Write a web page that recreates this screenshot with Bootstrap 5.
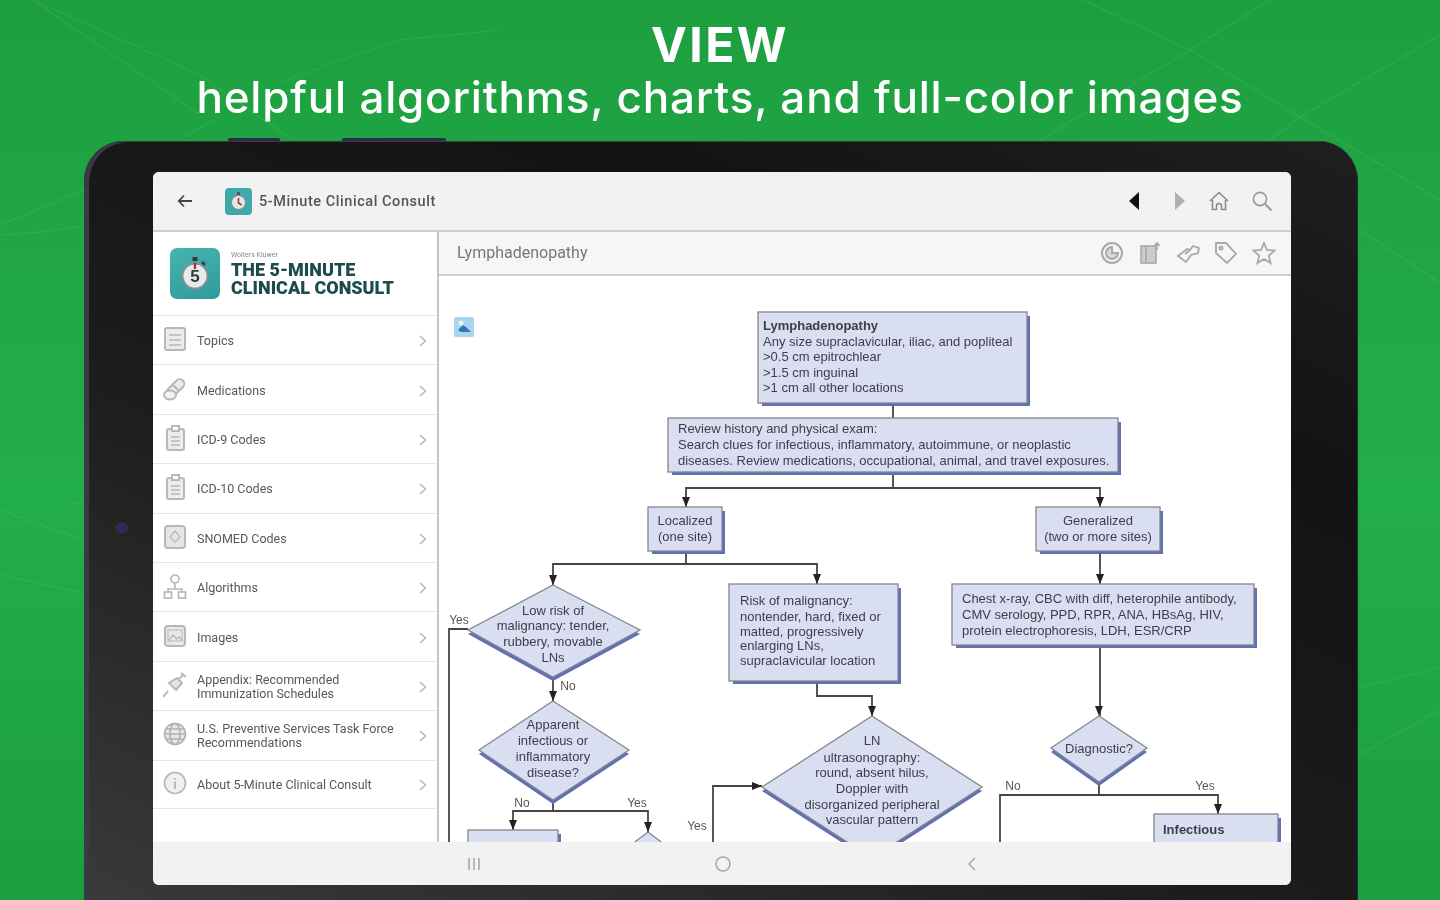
<!DOCTYPE html>
<html lang="en">
<head>
  <meta charset="UTF-8">
  <meta name="viewport" content="width=device-width, initial-scale=1.0">
  <title>5-Minute Clinical Consult</title>
  <link href="https://cdn.jsdelivr.net/npm/bootstrap@5.3.0/dist/css/bootstrap.min.css" rel="stylesheet">
  <style>
    html, body { height: 100%; }
    body { background: linear-gradient(180deg, #1e9f3f 0, #22ae49 55%, #1c9e40 100%); overflow: hidden; font-family: "Roboto", "Liberation Sans", sans-serif; }
    .bg-lines { position: absolute; left: 0; top: 0; }
    .promo { position: relative; height: 141px; padding-top: 17px; color: #fff; font-family: "Inter", "Liberation Sans", sans-serif; text-align: center; filter: blur(.4px); }
    .promo-title { font-size: 48px; font-weight: 700; line-height: 56px; letter-spacing: 2.4px; margin: 0; }
    .promo-sub { font-size: 44px; font-weight: 500; line-height: 48px; letter-spacing: .8px; margin: 0; }
    .tablet { position: relative; width: 1274px; height: 800px; margin-left: 84px; padding: 31px 67px 0 69px; background: linear-gradient(25deg, #3c3c3c 0, #1c1c1c 42%, #131313 75%, #1f1f1f 100%); box-shadow: inset 5px 1px 0 #383b47, inset -1px 0 0 #2a2a33; border-radius: 40px; }
    .tablet-btn { position: absolute; top: -3px; height: 3px; background-color: #2b2f45; border-radius: 2px 2px 0 0; }
    .tablet-btn.one { left: 144px; width: 52px; }
    .tablet-btn.two { left: 258px; width: 104px; }
    .tablet-cam { position: absolute; left: 33px; top: 383px; width: 10px; height: 8px; border-radius: 50%; background-color: #2a2a5c; box-shadow: 0 0 0 1px #3a3a44; }
    .screen { width: 1138px; height: 713px; background-color: #fff; border-radius: 6px; overflow: hidden; filter: blur(.7px); }
    .topbar { height: 58px; background-color: #f2f2f2; }
    .topbar-title { margin-left: 7px; padding-top: 1px; font-size: 14.5px; font-weight: 500; color: #555; letter-spacing: .55px; }
    .app-icon { width: 27px; height: 27px; margin-left: 32px; border-radius: 4px; background-color: #3fa9a9; }
    .back { margin-left: 24px; }
    .topbar-right { margin-left: auto; gap: 22px; padding-right: 18px; }
    .main-row { height: 612px; border-top: 2px solid #cfcfcf; }
    .side { width: 286px; flex: none; border-right: 2px solid #c4c4c4; }
    .brand { height: 83px; padding-left: 17px; }
    .brand-icon { width: 50px; height: 51px; border-radius: 7px; background: linear-gradient(160deg, #45b5ae, #2f9a9c); }
    .brand-text { margin-left: 11px; color: #1c4b4b; font-family: "Roboto", "Liberation Sans", sans-serif; font-weight: 900; font-size: 18px; line-height: 18px; }
    .brand-kicker { font-size: 7px; font-weight: 400; line-height: 9px; color: #888; margin-bottom: 1px; }
    .side .list-group-item { height: 49.4px; padding: 2px 10px 0 10px; display: flex; align-items: center; gap: 10px; border-color: #e6e6e6; border-width: 1px 0 0 0; font-size: 12.5px; line-height: 14px; color: #585858; background: transparent; }
    .side .list-group-item:last-child { border-bottom: 1px solid #e6e6e6; }
    .row-label { flex: 1; }
    .row-icon { width: 24px; height: 26px; flex: none; margin-top: -4px; }
    .pane { flex: 1; min-width: 0; }
    .pane-head { height: 44px; background-color: #f6f6f6; border-bottom: 2px solid #cfcfcf; padding-left: 18px; padding-right: 15px; font-size: 16px; color: #777; }
    .pane-tools { margin-left: auto; gap: 14px; }
    .chart { display: block; }
    .chart text { font-family: "Liberation Sans", sans-serif; font-size: 13px; fill: #3c3f4a; }
    .chart .ctr { text-anchor: middle; }
    .chart .lab { fill: #555; font-size: 12px; }
    .chart .hd { font-weight: 700; }
    .chart .nd { fill: #d9def0; stroke: #83868f; stroke-width: 1.3; }
    .chart .sh { fill: #5f70b5; }
    .chart .ln { fill: none; stroke: #444; stroke-width: 1.8; }
    .chart .ar { fill: #222; }
    .bottombar { height: 43px; background-color: #f2f2f2; position: relative; }
  </style>
</head>
<body>
  <svg class="bg-lines" width="1440" height="900" fill="none" stroke="#fff" stroke-width="1.2" opacity=".07">
    <path d="M33 0 200 75 290 138"/>
    <path d="M33 0 197 113"/>
    <path d="M183 138 213 120"/>
    <path d="M277 83 400 40 500 30"/>
    <path d="M1083 0 1190 50 1300 117 1440 200"/>
    <path d="M1270 0 1190 50 1040 140"/>
    <path d="M1440 35 1300 117 1270 140"/>
    <path d="M1360 230 1440 283"/>
    <path d="M0 225 84 190"/>
    <path d="M0 235 40 232 84 226"/>
    <path d="M0 510 84 540"/>
    <path d="M0 575 84 593"/>
    <path d="M68 503H84"/>
    <path d="M1358 688 1440 667"/>
    <path d="M1358 755 1440 710"/>
  </svg>

  <div class="promo">
    <h1 class="promo-title">VIEW</h1>
    <p class="promo-sub">helpful algorithms, charts, and full-color images</p>
  </div>

  <div class="tablet">
    <span class="tablet-btn one"></span>
    <span class="tablet-btn two"></span>
    <span class="tablet-cam"></span>

    <div class="screen">
      <div class="topbar d-flex align-items-center">
        <svg class="back" width="16" height="14" viewBox="0 0 16 14" fill="none" stroke="#444" stroke-width="1.8"><path d="M15 7H2M7 1.500 1.800 7 7 12.500"/></svg>
        <div class="app-icon d-flex align-items-center justify-content-center">
          <svg width="17" height="20" viewBox="0 0 17 20"><circle cx="8.500" cy="11.500" r="7" fill="#e4e6e6" stroke="#77868a"/><rect x="7" y="1" width="3" height="3" fill="#555"/><path d="M8.500 7v5l3 2" fill="none" stroke="#a33" stroke-width="1.600"/></svg>
        </div>
        <span class="topbar-title">5-Minute Clinical Consult</span>
        <div class="topbar-right d-flex align-items-center">
          <svg class="me-1" width="17" height="18" viewBox="0 0 17 18"><path d="M12 0v18L2 9z" fill="#111"/></svg>
          <svg width="17" height="18" viewBox="0 0 17 18"><path d="M5 0v18l10-9z" fill="#b0b0b0"/></svg>
          <svg width="20" height="20" viewBox="0 0 20 20" fill="none" stroke="#8a8a8a" stroke-width="1.600"><path d="M1 10 10 1.500l9 8.500M3.500 9v9.500h4V15a2.500 2.500 0 0 1 5 0v3.500h4V9"/></svg>
          <svg width="22" height="22" viewBox="0 0 22 22" fill="none" stroke="#9a9a9a" stroke-width="1.600"><circle cx="9" cy="9" r="6.600"/><path d="m14 14 6.500 6.500" stroke-width="2"/></svg>
        </div>
      </div>

      <div class="main-row d-flex">
        <div class="side">
          <div class="brand d-flex align-items-center">
            <div class="brand-icon d-flex align-items-center justify-content-center">
              <svg width="30" height="36" viewBox="0 0 30 36"><rect x="12.500" y="1" width="5" height="4" fill="#3a3a3a"/><path d="m22 6 3 3" stroke="#3a3a3a" stroke-width="2.500"/><circle cx="15" cy="20" r="12.500" fill="#e9ebeb" stroke="#84908f" stroke-width="2"/><text x="15" y="26" text-anchor="middle" font-family="Liberation Sans, sans-serif" font-weight="700" font-size="17" fill="#2e3a3c">5</text><path d="M15 7v6" stroke="#a6303a" stroke-width="2.400"/></svg>
            </div>
            <div class="brand-text">
              <div class="brand-kicker">Wolters Kluwer</div>
              THE 5-MINUTE<br>CLINICAL CONSULT
            </div>
          </div>
          <div class="list-group list-group-flush">
            <div class="list-group-item">
              <svg class="row-icon" viewBox="0 0 24 26" fill="none" stroke="#b8b8b8" stroke-width="2"><rect x="2" y="2" width="20" height="22" rx="2" fill="#ececec"/><path d="M6 9h12M6 14h12M6 19h12" stroke-width="1.500"/></svg>
              <span class="row-label">Topics</span>
              <svg width="8" height="12" viewBox="0 0 8 12" fill="none" stroke="#b4b4b4" stroke-width="1.400"><path d="m1 1 5.500 5L1 11"/></svg>
            </div>
            <div class="list-group-item">
              <svg class="row-icon" viewBox="0 0 24 26" fill="none" stroke="#b8b8b8" stroke-width="2"><rect x="8" y="1.500" width="9" height="21" rx="4.500" transform="rotate(45 12.500 12)" fill="#ececec"/><path d="m9 8 7 7"/><ellipse cx="7" cy="19" rx="6" ry="4.500" fill="#f2f2f2"/></svg>
              <span class="row-label">Medications</span>
              <svg width="8" height="12" viewBox="0 0 8 12" fill="none" stroke="#b4b4b4" stroke-width="1.400"><path d="m1 1 5.500 5L1 11"/></svg>
            </div>
            <div class="list-group-item">
              <svg class="row-icon" viewBox="0 0 24 26" fill="none" stroke="#b8b8b8" stroke-width="2"><rect x="4" y="4" width="17" height="21" rx="2" fill="#ececec"/><rect x="9" y="1" width="7" height="5" fill="#fff"/><path d="M8 12h9M8 16h9M8 20h9" stroke-width="1.400"/></svg>
              <span class="row-label">ICD-9 Codes</span>
              <svg width="8" height="12" viewBox="0 0 8 12" fill="none" stroke="#b4b4b4" stroke-width="1.400"><path d="m1 1 5.500 5L1 11"/></svg>
            </div>
            <div class="list-group-item">
              <svg class="row-icon" viewBox="0 0 24 26" fill="none" stroke="#b8b8b8" stroke-width="2"><rect x="4" y="4" width="17" height="21" rx="2" fill="#ececec"/><rect x="9" y="1" width="7" height="5" fill="#fff"/><path d="M8 12h9M8 16h9M8 20h9" stroke-width="1.400"/></svg>
              <span class="row-label">ICD-10 Codes</span>
              <svg width="8" height="12" viewBox="0 0 8 12" fill="none" stroke="#b4b4b4" stroke-width="1.400"><path d="m1 1 5.500 5L1 11"/></svg>
            </div>
            <div class="list-group-item">
              <svg class="row-icon" viewBox="0 0 24 26" fill="none" stroke="#b8b8b8" stroke-width="2"><rect x="2" y="2" width="20" height="22" rx="3" fill="#e6e6e6"/><path d="m12 7-5 6 5 5 5-5z" stroke-width="1.300"/></svg>
              <span class="row-label">SNOMED Codes</span>
              <svg width="8" height="12" viewBox="0 0 8 12" fill="none" stroke="#b4b4b4" stroke-width="1.400"><path d="m1 1 5.500 5L1 11"/></svg>
            </div>
            <div class="list-group-item">
              <svg class="row-icon" viewBox="0 0 24 26" fill="none" stroke="#b8b8b8" stroke-width="1.700"><circle cx="12" cy="6" r="4"/><path d="M12 10v5M5 19v-3h14v3"/><rect x="1.500" y="19" width="7" height="6"/><rect x="15.500" y="19" width="7" height="6"/></svg>
              <span class="row-label">Algorithms</span>
              <svg width="8" height="12" viewBox="0 0 8 12" fill="none" stroke="#b4b4b4" stroke-width="1.400"><path d="m1 1 5.500 5L1 11"/></svg>
            </div>
            <div class="list-group-item">
              <svg class="row-icon" viewBox="0 0 24 26" fill="none" stroke="#b8b8b8" stroke-width="2"><rect x="2" y="3" width="20" height="20" rx="3" fill="#e9e9e9"/><path d="m5 18 5-6 4 4 2-2 4 4" stroke-width="1.300"/><rect x="5" y="7" width="14" height="11" stroke-width="1"/></svg>
              <span class="row-label">Images</span>
              <svg width="8" height="12" viewBox="0 0 8 12" fill="none" stroke="#b4b4b4" stroke-width="1.400"><path d="m1 1 5.500 5L1 11"/></svg>
            </div>
            <div class="list-group-item">
              <svg class="row-icon" viewBox="0 0 24 26" fill="none" stroke="#b8b8b8" stroke-width="2"><path d="M0 25 5 19M6 11l7 7 6-7-5-5z" fill="#e4e4e4"/><path d="m16 7 5-5M18 1l5 4"/></svg>
              <span class="row-label">Appendix: Recommended<br>Immunization Schedules</span>
              <svg width="8" height="12" viewBox="0 0 8 12" fill="none" stroke="#b4b4b4" stroke-width="1.400"><path d="m1 1 5.500 5L1 11"/></svg>
            </div>
            <div class="list-group-item">
              <svg class="row-icon" viewBox="0 0 24 26" fill="none" stroke="#b0b0b0" stroke-width="1.500"><circle cx="12" cy="13" r="10.500" fill="#e6e6e6"/><ellipse cx="12" cy="13" rx="5" ry="10.500"/><path d="M1.500 13h21M3 8h18M3 18h18"/></svg>
              <span class="row-label">U.S. Preventive Services Task Force<br>Recommendations</span>
              <svg width="8" height="12" viewBox="0 0 8 12" fill="none" stroke="#b4b4b4" stroke-width="1.400"><path d="m1 1 5.500 5L1 11"/></svg>
            </div>
            <div class="list-group-item">
              <svg class="row-icon" viewBox="0 0 24 26" fill="none" stroke="#b8b8b8" stroke-width="1.700"><circle cx="12" cy="13" r="10.500" fill="#f0f0f0"/><path d="M12 8v1.500M12 11.500V19" stroke-width="2"/></svg>
              <span class="row-label">About 5-Minute Clinical Consult</span>
              <svg width="8" height="12" viewBox="0 0 8 12" fill="none" stroke="#b4b4b4" stroke-width="1.400"><path d="m1 1 5.500 5L1 11"/></svg>
            </div>
          </div>
        </div>

        <div class="pane">
          <div class="pane-head d-flex align-items-center">
            <span>Lymphadenopathy</span>
            <div class="pane-tools d-flex align-items-center">
              <svg width="24" height="24" viewBox="0 0 24 24" fill="none" stroke="#a8a8a8" stroke-width="2"><circle cx="12" cy="12" r="10"/><path d="M12 6a6 6 0 1 0 6 6h-6z" fill="#d8d8d8"/></svg>
              <svg width="24" height="24" viewBox="0 0 24 24" fill="none" stroke="#a8a8a8" stroke-width="1.600"><rect x="3" y="5" width="15" height="17" fill="#ccc"/><path d="M8 5v17M19 9V3M16 5l3-3 3 3"/></svg>
              <svg width="24" height="24" viewBox="0 0 24 24" fill="none" stroke="#a8a8a8" stroke-width="1.800"><path d="m2 15 9-7 3 1 3-4 6 2-1 5-7 2-5 7z"/><path d="m9 13 5-4"/></svg>
              <svg width="24" height="24" viewBox="0 0 24 24" fill="none" stroke="#a8a8a8" stroke-width="1.800"><path d="M2 2h10l10 11-9 9L2 12z"/><circle cx="7" cy="7" r="1.600"/></svg>
              <svg width="24" height="24" viewBox="0 0 24 24" fill="none" stroke="#a8a8a8" stroke-width="1.800"><path d="m12 2 3 7 7.500 .6-5.700 5 1.800 7.400L12 18l-6.600 4 1.800-7.400-5.700-5L9 9z"/></svg>
            </div>
          </div>

          <svg class="chart" width="852" height="566" viewBox="439 276 852 566">
            <!-- broken image marker -->
            <rect x="454" y="317" width="20" height="20" rx="2" fill="#a9d6ee"/>
            <path d="m458 330 5-5 4 3 4 4h-10z" fill="#2f78b8"/>
            <circle cx="461" cy="323" r="2.500" fill="#e8f5d8"/>

            <!-- connectors -->
            <path class="ln" d="M893 403v15M893 472v16M686 507v-19h414v19M686 551v13M553 585v-21h264v20M1100 551v33M1100 645v71M553 677v24M553 800v11M513 830v-19h135v21M817 681v15h55v20M468 629h-19v215M713 844v-58h49M1099 782v13M1000 844v-49h218v19"/>
            <path class="ar" d="M682 497h8l-4 10zM1096 497h8l-4 10zM549 575h8l-4 10zM813 574h8l-4 10zM1096 574h8l-4 10zM549 691h8l-4 10zM868 706h8l-4 10zM1095 706h8l-4 10zM509 820h8l-4 10zM644 822h8l-4 10zM1214 804h8l-4 10zM752 782v8l10-4z"/>

            <!-- boxes, offset rect under each is the blue drop edge -->
            <rect class="sh" x="762" y="316" width="268" height="90"/>
            <rect class="nd" x="758" y="312" width="269" height="91"/>
            <text class="hd" x="763" y="330">Lymphadenopathy</text>
            <text x="763" y="346">Any size supraclavicular, iliac, and popliteal</text>
            <text x="763" y="361">&gt;0.5 cm epitrochlear</text>
            <text x="763" y="377">&gt;1.5 cm inguinal</text>
            <text x="763" y="392">&gt;1 cm all other locations</text>

            <rect class="sh" x="672" y="422" width="449" height="53"/>
            <rect class="nd" x="668" y="418" width="450" height="54"/>
            <text x="678" y="433">Review history and physical exam:</text>
            <text x="678" y="449">Search clues for infectious, inflammatory, autoimmune, or neoplastic</text>
            <text x="678" y="465">diseases. Review medications, occupational, animal, and travel exposures.</text>

            <rect class="sh" x="652" y="511" width="73" height="43"/>
            <rect class="nd" x="648" y="507" width="74" height="44"/>
            <text class="ctr" x="685" y="525">Localized</text>
            <text class="ctr" x="685" y="541">(one site)</text>

            <rect class="sh" x="1040" y="511" width="123" height="43"/>
            <rect class="nd" x="1036" y="507" width="124" height="44"/>
            <text class="ctr" x="1098" y="525">Generalized</text>
            <text class="ctr" x="1098" y="541">(two or more sites)</text>

            <rect class="sh" x="733" y="588" width="168" height="96"/>
            <rect class="nd" x="729" y="584" width="169" height="97"/>
            <text x="740" y="605">Risk of malignancy:</text>
            <text x="740" y="621">nontender, hard, fixed or</text>
            <text x="740" y="636">matted, progressively</text>
            <text x="740" y="650">enlarging LNs,</text>
            <text x="740" y="665">supraclavicular location</text>

            <rect class="sh" x="956" y="588" width="301" height="60"/>
            <rect class="nd" x="952" y="584" width="302" height="61"/>
            <text x="962" y="603">Chest x-ray, CBC with diff, heterophile antibody,</text>
            <text x="962" y="619">CMV serology, PPD, RPR, ANA, HBsAg, HIV,</text>
            <text x="962" y="635">protein electrophoresis, LDH, ESR/CRP</text>

            <rect class="sh" x="472" y="834" width="89" height="20"/>
            <rect class="nd" x="468" y="830" width="90" height="20"/>
            <rect class="sh" x="1158" y="818" width="123" height="40"/>
            <rect class="nd" x="1154" y="814" width="124" height="40"/>
            <text class="hd" x="1163" y="834">Infectious</text>

            <!-- decisions -->
            <polygon class="sh" points="553,589 640,634 553,681 468,634"/>
            <polygon class="nd" points="553,585 640,630 553,677 468,630"/>
            <text class="ctr" x="553" y="615">Low risk of</text>
            <text class="ctr" x="553" y="630">malignancy: tender,</text>
            <text class="ctr" x="553" y="646">rubbery, movable</text>
            <text class="ctr" x="553" y="662">LNs</text>

            <polygon class="sh" points="553,705 629,754 553,804 479,754"/>
            <polygon class="nd" points="553,701 629,750 553,800 479,750"/>
            <text class="ctr" x="553" y="729">Apparent</text>
            <text class="ctr" x="553" y="745">infectious or</text>
            <text class="ctr" x="553" y="761">inflammatory</text>
            <text class="ctr" x="553" y="777">disease?</text>

            <polygon class="sh" points="872,720 982,791 872,862 762,791"/>
            <polygon class="nd" points="872,716 982,787 872,858 762,787"/>
            <text class="ctr" x="872" y="745">LN</text>
            <text class="ctr" x="872" y="762">ultrasonography:</text>
            <text class="ctr" x="872" y="777">round, absent hilus,</text>
            <text class="ctr" x="872" y="793">Doppler with</text>
            <text class="ctr" x="872" y="809">disorganized peripheral</text>
            <text class="ctr" x="872" y="824">vascular pattern</text>

            <polygon class="sh" points="1099,720 1147,752 1099,786 1051,752"/>
            <polygon class="nd" points="1099,716 1147,748 1099,782 1051,748"/>
            <text class="ctr" x="1099" y="753">Diagnostic?</text>

            <polygon class="nd" points="648,832 685,860 611,860"/>

            <!-- branch labels -->
            <text class="lab ctr" x="459" y="624">Yes</text>
            <text class="lab ctr" x="568" y="690">No</text>
            <text class="lab ctr" x="522" y="807">No</text>
            <text class="lab ctr" x="637" y="807">Yes</text>
            <text class="lab ctr" x="697" y="830">Yes</text>
            <text class="lab ctr" x="1013" y="790">No</text>
            <text class="lab ctr" x="1205" y="790">Yes</text>
          </svg>
        </div>
      </div>

      <div class="bottombar d-flex align-items-center">
        <svg class="ms-auto me-auto" width="520" height="18" viewBox="0 0 520 18" fill="none" stroke="#a8a8a8" stroke-width="1.600">
          <path d="M7 3v12M12 3v12M17 3v12"/>
          <circle cx="261" cy="9" r="7"/>
          <path d="m513 3-6 6 6 6"/>
        </svg>
      </div>
    </div>
  </div>
  <script src="https://cdn.jsdelivr.net/npm/bootstrap@5.3.0/dist/js/bootstrap.bundle.min.js"></script>
</body>
</html>
